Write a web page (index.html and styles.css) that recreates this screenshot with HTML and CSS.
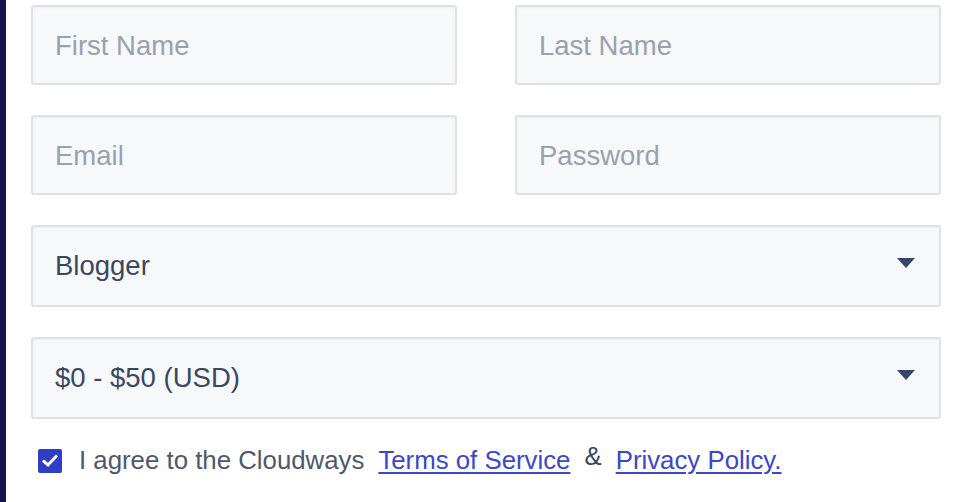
FILE: index.html
```html
<!DOCTYPE html>
<html>
<head>
<meta charset="utf-8">
<link rel="stylesheet" href="styles.css">
</head>
<body>
<div class="page">
  <div class="strip"></div>
  <form class="form">
    <div class="row two">
      <div class="field"><span class="ph">First Name</span></div>
      <div class="field"><span class="ph">Last Name</span></div>
    </div>
    <div class="row two">
      <div class="field"><span class="ph">Email</span></div>
      <div class="field"><span class="ph">Password</span></div>
    </div>
    <div class="row">
      <div class="field select"><span class="val">Blogger</span><span class="caret"></span></div>
    </div>
    <div class="row">
      <div class="field select"><span class="val">$0 - $50 (USD)</span><span class="caret"></span></div>
    </div>
    <div class="agree">
      <span class="check"><svg width="16" height="14" viewBox="0 0 16 14"><path d="M2 7.5 L6 11 L14 2.5" fill="none" stroke="#fff" stroke-width="3" stroke-linecap="square"/></svg></span>
      <span class="txt">I agree to the Cloudways</span>
      <a class="link" href="#">Terms of Service</a>
      <span class="amp">&amp;</span>
      <a class="link" href="#">Privacy Policy.</a>
    </div>
  </form>
</div>
</body>
</html>
```
FILE: styles.css
```css
html, body {
  margin: 0;
  padding: 0;
  background: #ffffff;
}
.page {
  display: flex;
  width: 958px;
  height: 502px;
  overflow: hidden;
  font-family: "Liberation Sans", Arial, sans-serif;
}
.strip {
  width: 6px;
  flex: none;
  background: #10154f;
}
.form {
  flex: 1;
  margin: 0;
  padding: 5px 17px 0 25px;
  display: flex;
  flex-direction: column;
  gap: 30px;
}
.row {
  display: flex;
  gap: 58px;
}
.field {
  flex: 1;
  height: 80px;
  box-sizing: border-box;
  border: 2px solid #dfe1e6;
  border-radius: 3px;
  background: #f7f8fa;
  box-shadow: inset 0 1px 2px rgba(0, 0, 0, 0.04);
  display: flex;
  align-items: center;
  padding: 0 22px;
  font-size: 27.5px;
}
.ph {
  color: #9aa1ae;
  margin-top: 2px;
}
.select {
  height: 82px;
  justify-content: space-between;
  padding-right: 24px;
}
.val {
  color: #3b465f;
}
.caret {
  width: 0;
  height: 0;
  border-left: 9px solid transparent;
  border-right: 9px solid transparent;
  border-top: 10px solid #36466a;
  margin-top: -6px;
}
.agree {
  display: flex;
  align-items: center;
  margin-top: -3px;
  padding-left: 7px;
  font-size: 25.8px;
  color: #4e586c;
}
.check {
  width: 24px;
  height: 24px;
  background: #2e3ec6;
  border-radius: 2px;
  display: flex;
  align-items: center;
  justify-content: center;
  margin-right: 17px;
}
.txt {
  margin-right: 14px;
}
.link {
  color: #3a48c9;
  text-decoration: underline;
  text-underline-offset: 3px;
}
.amp {
  margin: -8px 14px 0;
  color: #3b465f;
}
```
